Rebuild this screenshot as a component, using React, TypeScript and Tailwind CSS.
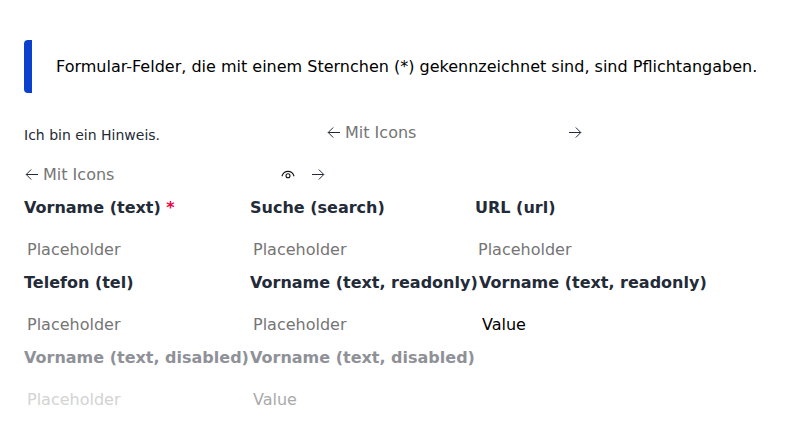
function Arrow({ flip = false, className = "" }: { flip?: boolean; className?: string }) {
  return (
    <svg viewBox="0 0 16 16" className={"h-4 w-4 shrink-0 " + (flip ? "-scale-x-100 " : "") + className} fill="none" stroke="#252a3a" strokeWidth="1">
      <path d="M2 7.500H13.700M8.800 2.500 13.800 7.500 8.800 12.500" />
    </svg>
  );
}

function Eye({ className = "" }: { className?: string }) {
  return (
    <svg viewBox="0 0 16 16" className={"h-4 w-4 shrink-0 " + className} fill="none" stroke="#111111" strokeWidth="1.1">
      <path d="M1.900 9.200C3 6 5.300 4.400 8 4.400s5 1.600 6.100 4.800" />
      <circle cx="8" cy="8.700" r="2" />
    </svg>
  );
}

type FieldProps = { label: string; text: string; width: string; tracking?: string; required?: boolean; disabled?: boolean; value?: boolean };

function Field({ label, text, width, tracking = "", required, disabled, value }: FieldProps) {
  const labelColor = disabled ? "text-[#8f9198]" : "text-[#232a38]";
  const textColor = disabled ? (value ? "text-[#aaaaaa]" : "text-[#d3d3d3]") : value ? "text-black" : "text-[#757575]";
  return (
    <div className={"flex h-[75px] shrink-0 flex-col gap-[22px] whitespace-nowrap " + width}>
      <div className={"h-5 font-bold leading-5 " + labelColor + " " + tracking}>
        {label}
        {required && <span className="text-[#eb0046]"> *</span>}
      </div>
      <div className={"h-5 pl-[3px] leading-5 " + textColor}>{text}</div>
    </div>
  );
}

export default function App() {
  return (
    <main className="h-[446px] w-[800px] overflow-hidden bg-white pl-6 pt-10 font-['Verdana','DejaVu_Sans',sans-serif] text-base">
      <div className="flex h-[53px] items-center rounded-l-[4px] border-l-8 border-[#0b41cd] pl-6 pt-px">
        <p className="whitespace-nowrap text-black">Formular-Felder, die mit einem Sternchen (*) gekennzeichnet sind, sind Pflichtangaben.</p>
      </div>
      <div className="mt-[30px] flex h-5 items-center">
        <p className="w-[302px] pt-[3px] text-sm text-[#232a38]">Ich bin ein Hinweis.</p>
        <div className="flex w-[257px] items-center gap-[3px] text-[#757575]"><Arrow flip />Mit Icons<Arrow className="ml-auto" /></div>
      </div>
      <div className="mt-[22px] flex h-5 items-center text-[#757575]"><Arrow flip className="mr-[3px]" /><span className="w-[237px]">Mit Icons</span><Eye /><Arrow className="ml-[14px]" /></div>
      <div className="mt-[13px] flex">
        <Field label="Vorname (text)" text="Placeholder" width="w-[226px]" required />
        <Field label="Suche (search)" text="Placeholder" width="w-[225px]" />
        <Field label="URL (url)" text="Placeholder" width="w-[225px]" />
      </div>
      <div className="flex">
        <Field label="Telefon (tel)" text="Placeholder" width="w-[226px]" />
        <Field label="Vorname (text, readonly)" text="Placeholder" width="w-[229px]" />
        <Field label="Vorname (text, readonly)" text="Value" width="w-[229px]" value />
      </div>
      <div className="flex">
        <Field label="Vorname (text, disabled)" text="Placeholder" width="w-[226px]" disabled />
        <Field label="Vorname (text, disabled)" text="Value" width="w-[226px]" value disabled />
      </div>
    </main>
  );
}
